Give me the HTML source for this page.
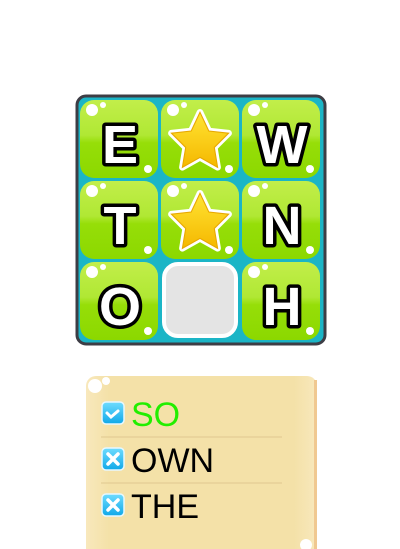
<!DOCTYPE html>
<html><head><style>
html,body{margin:0;padding:0;background:#fff;width:400px;height:549px;overflow:hidden}
svg{position:absolute;left:0;top:0}
</style></head><body>
<svg width="400" height="549" viewBox="0 0 400 549">
<defs>
<linearGradient id="g" x1="0" y1="0" x2="0" y2="1">
<stop offset="0" stop-color="#c2ee4a"/><stop offset="0.45" stop-color="#b0e834"/><stop offset="0.55" stop-color="#96de08"/><stop offset="1" stop-color="#8cd800"/>
</linearGradient>
<linearGradient id="s" x1="0" y1="0" x2="0" y2="1">
<stop offset="0" stop-color="#ffe433"/><stop offset="1" stop-color="#f5b800"/>
</linearGradient>
<linearGradient id="p" x1="0" y1="0" x2="1" y2="0">
<stop offset="0" stop-color="#f8e8bc"/><stop offset="0.1" stop-color="#f4e1a8"/><stop offset="0.9" stop-color="#f4e1a8"/><stop offset="1" stop-color="#f8e8bc"/>
</linearGradient>
<linearGradient id="b" x1="0" y1="0" x2="0" y2="1">
<stop offset="0" stop-color="#6fdcff"/><stop offset="1" stop-color="#10a8e8"/>
</linearGradient>
<g id="cell"><rect x="0" y="0" width="78" height="78" rx="14" fill="url(#g)"/>
<circle cx="12" cy="10" r="6" fill="#fff"/><circle cx="23" cy="5" r="3" fill="#fff"/><circle cx="68" cy="69" r="4" fill="#fff"/></g>
<path id="star" d="M0,-27 L8,-10 L26,-8 L13,5 L16,23 L0,14 L-16,23 L-13,5 L-26,-8 L-8,-10Z"/>
<g id="chk"><rect x="0" y="0" width="22" height="22" rx="4" fill="url(#b)" stroke="#e6f8ff" stroke-width="1.5"/></g>
</defs>
<rect x="77" y="96" width="248" height="248" rx="9" fill="#1bb5c6" stroke="#3d3d45" stroke-width="3"/>
<use href="#cell" x="80" y="100"/><use href="#cell" x="161" y="100"/><use href="#cell" x="242" y="100"/>
<use href="#cell" x="80" y="181"/><use href="#cell" x="161" y="181"/><use href="#cell" x="242" y="181"/>
<use href="#cell" x="80" y="262"/><use href="#cell" x="242" y="262"/>
<rect x="164" y="264" width="72" height="72" rx="14" fill="#e4e4e4" stroke="#fff" stroke-width="4"/>
<g font-family="Liberation Sans, sans-serif" font-weight="bold" font-size="54" text-anchor="middle" fill="#fff" stroke="#000" stroke-width="7" stroke-linejoin="round" paint-order="stroke">
<text x="120" y="163">E</text><text x="282" y="163">W</text>
<text x="120" y="244">T</text><text x="282" y="244">N</text>
<text x="120" y="325">O</text><text x="282" y="325">H</text>
</g>
<g transform="translate(200,142) scale(1.1)"><use href="#star" fill="#fff" stroke="#fff" stroke-width="6" stroke-linejoin="round"/><use href="#star" fill="url(#s)" stroke="#e8a800" stroke-width="1"/></g>
<g transform="translate(200,223) scale(1.1)"><use href="#star" fill="#fff" stroke="#fff" stroke-width="6" stroke-linejoin="round"/><use href="#star" fill="url(#s)" stroke="#e8a800" stroke-width="1"/></g>
<rect x="86" y="376" width="231" height="190" rx="10" fill="url(#p)"/>
<rect x="314" y="380" width="3" height="170" fill="#f0c890"/>
<circle cx="95" cy="386" r="7" fill="#fff"/><circle cx="106" cy="381" r="4" fill="#fff"/><circle cx="306" cy="545" r="6" fill="#fff"/>
<line x1="101" y1="437" x2="282" y2="437" stroke="#e0c890" stroke-width="1"/>
<line x1="101" y1="483" x2="282" y2="483" stroke="#e0c890" stroke-width="1"/>
<use href="#chk" x="102" y="402"/><use href="#chk" x="102" y="448"/><use href="#chk" x="102" y="494"/>
<path d="M107,413 l4,4 l7,-6" fill="none" stroke="#fff" stroke-width="3" stroke-linecap="round"/>
<path d="M108,454 l10,10 M118,454 l-10,10" stroke="#fff" stroke-width="3.5" stroke-linecap="round"/>
<path d="M108,500 l10,10 M118,500 l-10,10" stroke="#fff" stroke-width="3.5" stroke-linecap="round"/>
<g font-family="Liberation Sans, sans-serif" font-size="34">
<text x="131" y="426" fill="#22ee00">SO</text>
<text x="131" y="472" fill="#000">OWN</text>
<text x="131" y="518" fill="#000">THE</text>
</g>
</svg>
</body></html>
